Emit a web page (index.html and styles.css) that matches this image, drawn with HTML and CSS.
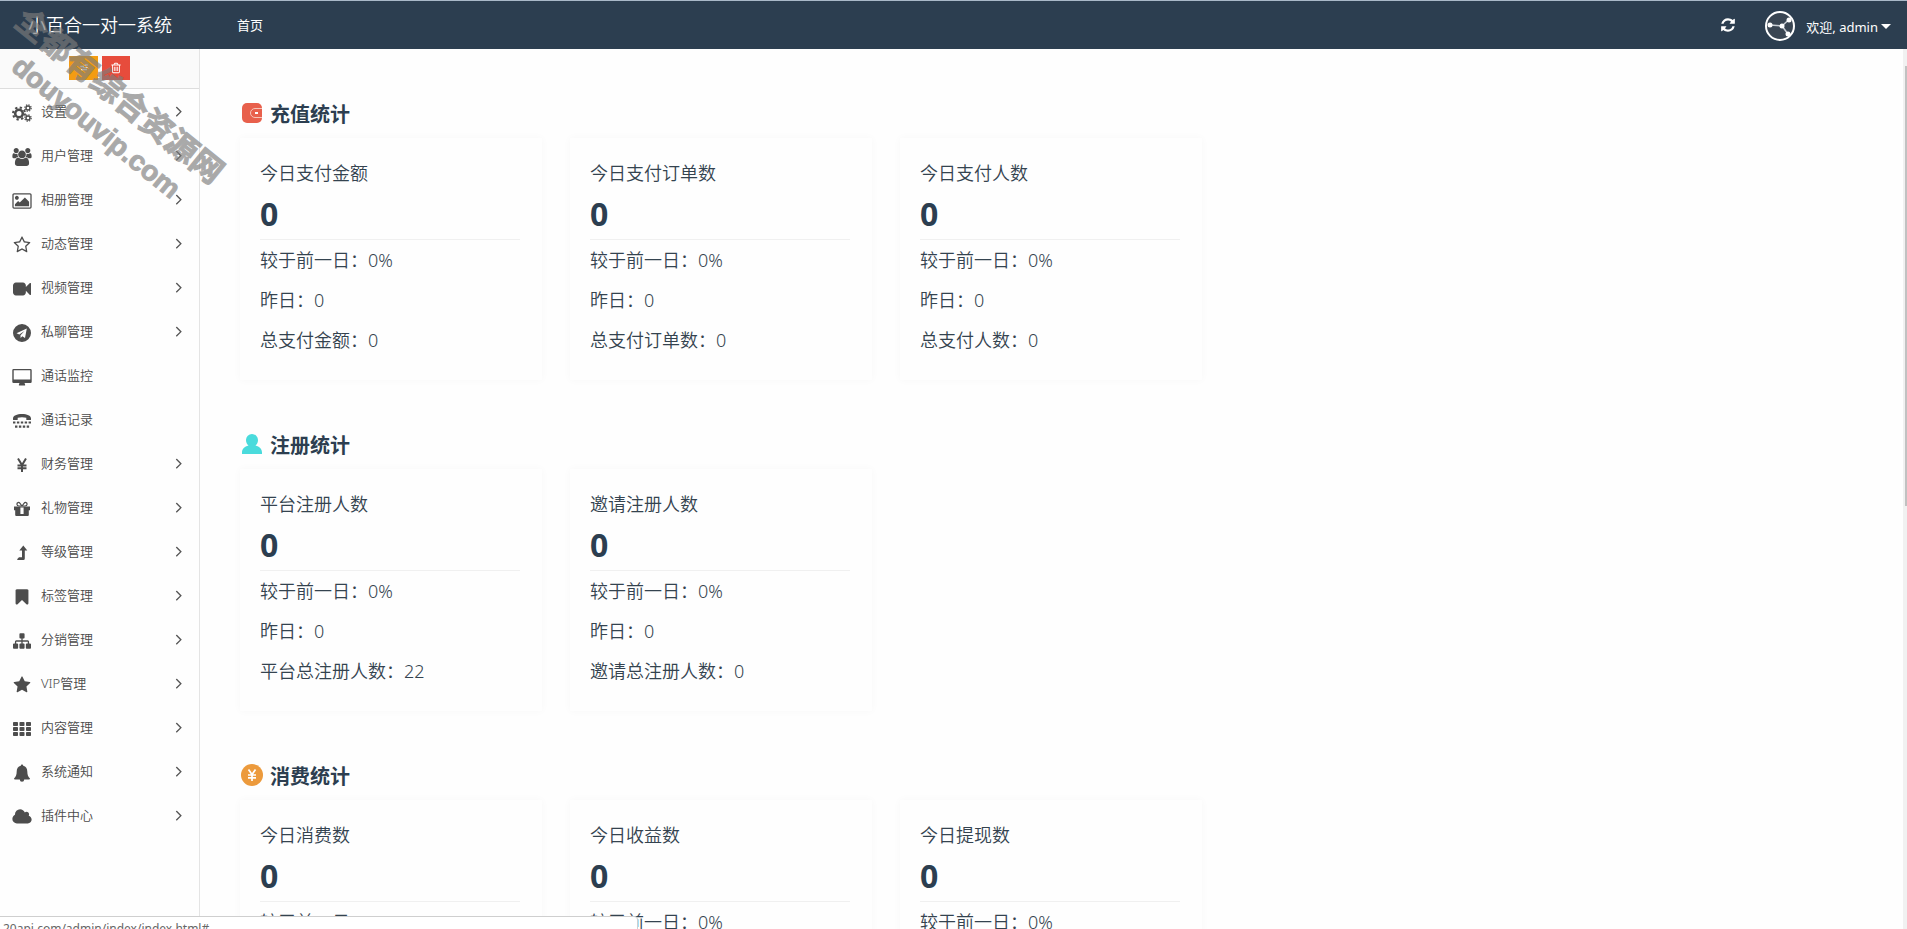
FILE: index.html
```html
<!DOCTYPE html>
<html lang="zh-CN">
<head>
<meta charset="utf-8">
<title>小百合一对一系统</title>
<link rel="stylesheet" href="styles.css">
</head>
<body>
<header class="navbar">
  <a class="brand" href="#">小百合一对一系统</a>
  <nav class="topnav"><a href="#">首页</a></nav>
  <div class="user-area">
    <button class="refresh" type="button" aria-label="刷新"><svg viewBox="0 0 1792 1792"><path d="M1639 1056q0 5-1 7-64 268-268 434.500t-478 166.500q-146 0-282.500-55t-243.500-157l-129 129q-19 19-45 19t-45-19-19-45v-448q0-26 19-45t45-19h448q26 0 45 19t19 45-19 45l-137 137q71 66 161 102t187 36q134 0 250-65t186-179q11-17 53-117 8-23 30-23h192q13 0 22.500 9.500t9.500 22.500zm25-800v448q0 26-19 45t-45 19h-448q-26 0-45-19t-19-45 19-45l138-138q-148-137-349-137-134 0-250 65t-186 179q-11 17-53 117-8 23-30 23h-199q-13 0-22.500-9.500t-9.500-22.500v-7q65-268 270-434.500t480-166.500q146 0 284 55.500t245 156.500l130-129q19-19 45-19t45 19 19 45z"/></svg></button>
    <button class="account" type="button">
      <svg class="avatar" viewBox="0 0 32 32"><circle cx="16" cy="16" r="14" fill="#3a4653" stroke="#fff" stroke-width="2"/><path d="M6 15L18 16L25 9.500M18 16L24 24" fill="none" stroke="#c9ced4" stroke-width="1.500"/><g fill="#fff"><circle cx="6" cy="15" r="2.500"/><circle cx="18" cy="16" r="2.500"/><circle cx="25" cy="10" r="2.500"/><circle cx="24" cy="24" r="2.500"/></g></svg>
      <span>欢迎, admin</span><i class="caret"></i>
    </button>
  </div>
</header>
<div class="body">
  <aside class="sidebar">
    <div class="shortcuts">
      <button class="sc sc-orange" type="button" aria-label="常用"><svg viewBox="0 0 16 16"><path d="M3 5h5v2h-5zM9 3h4v2h-4zM4 9h8v2h-8zM7 7h6v1h-6z"/></svg></button>
      <button class="sc sc-red" type="button" aria-label="清除缓存"><svg viewBox="0 0 1792 1792"><path d="M704 736v576q0 14-9 23t-23 9h-64q-14 0-23-9t-9-23v-576q0-14 9-23t23-9h64q14 0 23 9t9 23zm256 0v576q0 14-9 23t-23 9h-64q-14 0-23-9t-9-23v-576q0-14 9-23t23-9h64q14 0 23 9t9 23zm256 0v576q0 14-9 23t-23 9h-64q-14 0-23-9t-9-23v-576q0-14 9-23t23-9h64q14 0 23 9t9 23zm128 724v-948h-896v948q0 22 7 40.500t14.500 27 10.500 8.500h832q3 0 10.500-8.500t14.500-27 7-40.500zm-672-1076h448l-48-117q-7-9-17-11h-317q-10 2-17 11zm928 32v64q0 14-9 23t-23 9h-96v948q0 83-47 143.500t-113 60.500h-832q-66 0-113-58.500t-47-141.500v-952h-96q-14 0-23-9t-9-23v-64q0-14 9-23t23-9h309l70-167q15-37 54-63t79-26h320q40 0 79 26t54 63l70 167h309q14 0 23 9t9 23z"/></svg></button>
    </div>
    <nav class="menu" id="menu"></nav>
  </aside>
  <main class="content" id="content"></main>
  <div class="scrolltrack"><div class="thumb"></div></div>
</div>
<div class="watermark"><p class="wm-name">全都有综合资源网</p><p class="wm-url">douyouvip.com</p></div>
<div class="statusbar">20api.com/admin/index/index.html#</div>
<script src="app.js"></script>
</body>
</html>
```

FILE: styles.css
```css
* { box-sizing: border-box; }
body {
  margin: 0;
  height: 100vh;
  overflow: hidden;
  display: flex;
  flex-direction: column;
  background: #fefefe;
  color: #2c3e50;
  font-family: "Noto Sans", "Noto Sans CJK SC", sans-serif;
  font-size: 13px;
}
a { color: inherit; text-decoration: none; }
button { border: 0; padding: 0; background: none; color: inherit; font: inherit; }
p, h2 { margin: 0; }

.navbar {
  flex: none;
  display: flex;
  align-items: center;
  height: 49px;
  border-top: 1px solid #a9b8c8;
  background: #2c3e50;
  color: #fff;
}
.brand { width: 200px; padding: 0 0 2px 28px; font-size: 18px; font-weight: 350; }
.topnav { flex: 1; padding: 0 0 2px 37px; }
.user-area { display: flex; align-items: center; gap: 28px; padding-right: 16px; }
.refresh svg { display: block; width: 16px; height: 16px; fill: #fff; }
.account { display: flex; align-items: center; padding-top: 2px; }
.avatar { width: 32px; height: 32px; margin-right: 10px; }
.caret { margin-left: 3px; border: 5px solid transparent; border-top: 5px solid #fff; border-bottom: 0; }

.body { flex: 1; min-height: 0; display: flex; }
.sidebar { flex: none; width: 200px; border-right: 1px solid #e4e4e4; }
.shortcuts {
  display: flex;
  gap: 4px;
  height: 40px;
  padding: 7px 0 0 69px;
  background: #fafafa;
  border-bottom: 1px solid #ddd;
}
.sc { display: flex; align-items: center; justify-content: center; width: 28px; height: 24px; }
.sc svg { width: 12px; height: 12px; fill: #fff; }
.sc-orange { width: 29px; background: #f39c12; }
.sc-red { background: #e74c3c; }

.menu a {
  display: flex;
  align-items: center;
  height: 44px;
  padding: 0 11px 0 12px;
  color: #4a4a4a;
}
.menu .ico { width: 20px; height: 18px; margin: 3px 9px 0 0; fill: #4d4d4d; }
.menu span { flex: 1; padding-bottom: 2px; font-weight: 350; }
.menu .arrow { width: 18px; height: 20px; fill: #555; }

.content { flex: 1; min-width: 0; overflow: hidden; padding: 49px 40px 0; }
.block { margin-bottom: 49px; }
.block h2 { display: flex; align-items: center; gap: 8px; height: 30px; font-size: 20px; font-weight: 700; }
.block h2 svg { width: 22px; height: 22px; margin-left: 1px; margin-right: -1px; }
.cards { display: flex; gap: 30px; margin-top: 10px; }
.card { width: 302px; margin-right: -2px; height: 242px; padding: 15px 22px 15px 20px; background: #fefefe; box-shadow: 0 0 8px rgba(0, 0, 0, .03); }
.card p { color: #34434f; font-size: 18px; line-height: 40px; font-weight: 350; }
.card .num { height: 47px; border-bottom: 1px solid #f0f0f0; color: #2c3e50; font-size: 32px; line-height: 42px; font-weight: 700; }

.scrolltrack { flex: none; width: 4px; padding: 17px 0 0 2px; background: #f1f1f1; }
.thumb { height: 51%; background: #c1c1c1; }

.watermark {
  position: absolute;
  left: 32px;
  top: 1px;
  transform: rotate(39deg);
  transform-origin: 0 0;
  color: #7c7c7c;
  opacity: .65;
  font-weight: 700;
  white-space: nowrap;
  pointer-events: none;
  -webkit-text-stroke: 1px #7c7c7c;
}
.wm-name { font-size: 32px; line-height: 36px; }
.wm-url { padding: 4px 0 0 26px; font-family: "Liberation Sans", sans-serif; font-size: 28px; line-height: 36px; }

.statusbar {
  position: absolute;
  left: 0;
  top: calc(100vh - 13px);
  width: 638px;
  height: 24px;
  padding-left: 3px;
  border: 1px solid #cfcfcf;
  border-left: 0;
  border-top-right-radius: 4px;
  background: #fff;
  color: #666;
  font-size: 12px;
  line-height: 24px;
}
```

FILE: app.js
```js
const icons = {
  cogs: ['0 0 20 18', '<g fill="none" stroke="#4d4d4d"><circle cx="7" cy="9.500" r="3.800" stroke-width="2.600"/><circle cx="7" cy="9.500" r="6" stroke-width="2" stroke-dasharray="2.300 2.412"/><circle cx="16" cy="4" r="2" stroke-width="1.400"/><circle cx="16" cy="4" r="3.200" stroke-width="1.200" stroke-dasharray="1.350 1.163"/><circle cx="16" cy="14" r="2" stroke-width="1.400"/><circle cx="16" cy="14" r="3.200" stroke-width="1.200" stroke-dasharray="1.350 1.163"/></g>'],
  users: ['0 0 1920 1792', '<path d="M593 896q-162 5-265 128h-134q-82 0-138-40.500t-56-118.500q0-353 124-353 6 0 43.500 21t97.500 42.500 119 21.500q67 0 133-23-5 37-5 66 0 139 81 256zm1071 637q0 120-73 189.500t-194 69.500h-874q-121 0-194-69.500t-73-189.500q0-53 3.500-103.500t14-109 26.500-108.500 43-97.500 62-81 85.500-53.500 111.500-20q10 0 43 21.500t73 48 107 48 135 21.500 135-21.500 107-48 73-48 43-21.500q61 0 111.500 20t85.500 53.500 62 81 43 97.500 26.500 108.500 14 109 3.500 103.500zm-1024-1277q0 106-75 181t-181 75-181-75-75-181 75-181 181-75 181 75 75 181zm704 384q0 159-112.500 271.500t-271.500 112.500-271.500-112.500-112.500-271.500 112.500-271.500 271.500-112.500 271.500 112.500 112.500 271.500zm576 225q0 78-56 118.500t-138 40.500h-134q-103-123-265-128 81-117 81-256 0-29-5-66 66 23 133 23 59 0 119-21.500t97.500-42.500 43.500-21q124 0 124 353zm-128-609q0 106-75 181t-181 75-181-75-75-181 75-181 181-75 181 75 75 181z"/>'],
  picture: ['-64 0 1920 1792', '<path d="M576 576q0 80-56 136t-136 56-136-56-56-136 56-136 136-56 136 56 56 136zm1024 384v448h-1408v-192l320-320 160 160 512-512zm96-704h-1600q-13 0-22.500 9.500t-9.500 22.500v1216q0 13 9.500 22.500t22.500 9.500h1600q13 0 22.500-9.500t9.500-22.500v-1216q0-13-9.500-22.500t-22.500-9.500zm160 32v1216q0 66-47 113t-113 47h-1600q-66 0-113-47t-47-113v-1216q0-66 47-113t113-47h1600q66 0 113 47t47 113z"/>'],
  starO: ['0 0 1792 1792', '<path d="M1201 1004l306-297-422-62-189-382-189 382-422 62 306 297-73 421 378-199 377 199zm527-357q0 22-26 48l-363 354 86 500q1 7 1 20 0 50-41 50-19 0-40-12l-449-236-449 236q-22 12-40 12-21 0-31.500-14.500t-10.500-35.500q0-6 2-20l86-500-364-354q-25-27-25-48 0-37 56-46l502-73 225-455q19-41 49-41t49 41l225 455 502 73q56 9 56 46z"/>'],
  video: ['0 0 1792 1792', '<path d="M1792 352v1088q0 42-39 59-13 5-25 5-27 0-45-19l-403-403v166q0 119-84.500 203.500t-203.500 84.500h-704q-119 0-203.500-84.500t-84.500-203.500v-704q0-119 84.500-203.500t203.500-84.500h704q119 0 203.500 84.500t84.500 203.500v165l403-402q18-19 45-19 12 0 25 5 39 17 39 59z"/>'],
  telegram: ['0 0 18 18', '<path fill-rule="evenodd" d="M9 0a9 9 0 1 1 0 18a9 9 0 0 1 0-18zM13.800 4.600L3.500 9.300L6.300 10.500L11.500 7L7.500 11.200L7.600 14L9.300 12.300L12 14z"/>'],
  desktop: ['0 0 20 18', '<path fill-rule="evenodd" d="M1.500 1h17a1.200 1.200 0 0 1 1.200 1.200v11.600a1.200 1.200 0 0 1-1.200 1.200h-6l.6 1.500v1h-6.200v-1l.6-1.500h-6a1.200 1.200 0 0 1-1.200-1.200v-11.600a1.200 1.200 0 0 1 1.200-1.200zM1.700 2.300v9.200h16.600v-9.200z"/>'],
  tty: ['0 0 18 18', '<path d="M0 6.500C0 3.500 4 2 9 2s9 1.500 9 4.500v1q0 .5-.5.5h-3.500q-.7 0-.7-.6v-1.600q-4.300-1-8.600 0v1.600q0 .6-.7.600h-3.500q-.5 0-.5-.5zM0 9.500h2.400v2h-2.400zM3.900 9.500h2.400v2h-2.400zM7.800 9.500h2.400v2h-2.400zM11.700 9.500h2.400v2h-2.400zM15.600 9.500h2.400v2h-2.400zM2 13.500h2.400v2.200h-2.400zM5.900 13.500h2.400v2.200h-2.400zM9.800 13.500h2.400v2.200h-2.400zM13.700 13.500h2.400v2.200h-2.400z"/>'],
  yen: ['0 0 18 18', '<path fill="none" stroke="#4d4d4d" stroke-width="2" d="M5 2.500L9 9L13 2.500M4.500 9.500h9M4.500 12.300h9M9 9v7"/>'],
  gift: ['0 0 18 18', '<path fill-rule="evenodd" d="M1 6.500h16v3.800h-1.200v4.700q0 1-1 1h-11.600q-1 0-1-1v-4.700h-1.200zM7.400 7.500v6.500h3.200v-6.500z"/><path fill="none" stroke="#4d4d4d" stroke-width="1.200" d="M9 6L7 3.300C5.800 1.800 3.800 2.500 3.900 4.300C4 5.500 5 6 6 6zM9 6L11 3.300C12.200 1.800 14.200 2.500 14.100 4.300C14 5.500 13 6 12 6z"/>'],
  level: ['0 0 18 18', '<path d="M10.300 1.500L14.300 6.500H11.800V14.500Q11.800 16 10.300 16H4.500L4.100 15.300L6 13.300H9V6.500H6.300z"/>'],
  bookmark: ['0 0 1792 1792', '<path d="M1420 128q23 0 44 9 33 13 52.500 41t19.500 62v1289q0 34-19.500 62t-52.500 41q-19 8-44 8-48 0-83-32l-441-424-441 424q-36 33-83 33-23 0-44-9-33-13-52.500-41t-19.500-62v-1289q0-34 19.500-62t52.500-41q21-9 44-9h1048z"/>'],
  sitemap: ['0 0 1792 1792', '<path d="M1792 1248v320q0 40-28 68t-68 28h-320q-40 0-68-28t-28-68v-320q0-40 28-68t68-28h96v-192h-512v192h96q40 0 68 28t28 68v320q0 40-28 68t-68 28h-320q-40 0-68-28t-28-68v-320q0-40 28-68t68-28h96v-192h-512v192h96q40 0 68 28t28 68v320q0 40-28 68t-68 28h-320q-40 0-68-28t-28-68v-320q0-40 28-68t68-28h96v-192q0-52 38-90t90-38h512v-192h-96q-40 0-68-28t-28-68v-320q0-40 28-68t68-28h320q40 0 68 28t28 68v320q0 40-28 68t-68 28h-96v192h512q52 0 90 38t38 90v192h96q40 0 68 28t28 68z"/>'],
  star: ['0 0 1792 1792', '<path d="M1728 647q0 22-26 48l-363 354 86 500q1 7 1 20 0 21-10.500 35.500t-30.500 14.500q-19 0-40-12l-449-236-449 236q-22 12-40 12-21 0-31.500-14.500t-10.500-35.500q0-6 2-20l86-500-364-354q-25-27-25-48 0-37 56-46l502-73 225-455q19-41 49-41t49 41l225 455 502 73q56 9 56 46z"/>'],
  th: ['0 0 18 18', [2, 7, 12].map(y => [0, 6.5, 13].map(x => `<rect x="${x}" y="${y}" width="5" height="4" rx=".8"/>`).join('')).join('')],
  bell: ['0 0 18 18', '<path d="M9 .5a1.200 1.200 0 0 1 1.200 1.300C13 2.500 14.300 4.700 14.300 7.500C14.300 11 15.300 13 17 14.500Q17 15.500 16 15.500H11.200A2.200 2.200 0 0 1 6.800 15.500H2Q1 15.500 1 14.500C2.700 13 3.700 11 3.700 7.500C3.700 4.700 5 2.500 7.800 1.800A1.200 1.200 0 0 1 9 .5z"/>'],
  cloud: ['64 0 1920 1792', '<path d="M1984 1152q0 159-112.500 271.500t-271.500 112.500h-1088q-185 0-316.500-131.500t-131.500-316.500q0-132 71-241.500t187-163.500q-2-28-2-43 0-212 150-362t362-150q158 0 286.500 88t187.500 230q70-62 166-62 106 0 181 75t75 181q0 75-41 138 129 30 213 134.500t84 239.500z"/>'],
  arrow: ['0 0 1792 1792', '<path d="M1171 960q0 13-10 23l-466 466q-10 10-23 10t-23-10l-50-50q-10-10-10-23t10-23l393-393-393-393q-10-10-10-23t10-23l50-50q10-10 23-10t23 10l466 466q10 10 10 23z"/>'],
  wallet: ['0 0 22 22', '<rect x="1" y="1" width="20" height="20" rx="5" fill="#e8604c"/><path d="M21 6.500H14a4.500 4.500 0 0 0 0 9H21" fill="none" stroke="#f7c4b8"/><path d="M14 11h3" stroke="#fff" stroke-width="2"/>'],
  person: ['0 0 22 22', '<path fill="#4adbdc" d="M11 1a6 6 0 0 1 6 6c0 2.500-1 4.500-2.500 5.500C18.500 13.500 21 16 21 19.500V21H1V19.500C1 16 3.500 13.500 7.500 12.500C6 11.500 5 9.500 5 7a6 6 0 0 1 6-6z"/>'],
  coin: ['0 0 22 22', '<circle cx="11" cy="11" r="11" fill="#ec9a3c"/><path d="M7.500 5.500L11 10.500L14.500 5.500M7 11h8M7 13.800h8M11 10.500V17" fill="none" stroke="#fff" stroke-width="1.700"/>']
};
const svg = (name, cls) => `<svg class="${cls}" viewBox="${icons[name][0]}" aria-hidden="true">${icons[name][1]}</svg>`;

const menu = [
  ['cogs', '设置', 1], ['users', '用户管理', 1], ['picture', '相册管理', 1], ['starO', '动态管理', 1],
  ['video', '视频管理', 1], ['telegram', '私聊管理', 1], ['desktop', '通话监控', 0], ['tty', '通话记录', 0],
  ['yen', '财务管理', 1], ['gift', '礼物管理', 1], ['level', '等级管理', 1], ['bookmark', '标签管理', 1],
  ['sitemap', '分销管理', 1], ['star', 'VIP管理', 1], ['th', '内容管理', 1], ['bell', '系统通知', 1], ['cloud', '插件中心', 1]
];
document.getElementById('menu').innerHTML = menu.map(([icon, label, sub]) =>
  `<a href="#">${svg(icon, 'ico')}<span>${label}</span>${sub ? svg('arrow', 'arrow') : ''}</a>`).join('');

const blocks = [
  ['wallet', '充值统计', [['今日支付金额', '总支付金额：0'], ['今日支付订单数', '总支付订单数：0'], ['今日支付人数', '总支付人数：0']]],
  ['person', '注册统计', [['平台注册人数', '平台总注册人数：22'], ['邀请注册人数', '邀请总注册人数：0']]],
  ['coin', '消费统计', [['今日消费数'], ['今日收益数'], ['今日提现数']]]
];
document.getElementById('content').innerHTML = blocks.map(([icon, title, cards]) =>
  `<section class="block"><h2>${svg(icon, 'title-ico')}${title}</h2><div class="cards">` +
  cards.map(([name, total]) =>
    `<article class="card"><p>${name}</p><p class="num">0</p><p>较于前一日：0%</p>${total ? `<p>昨日：0</p><p>${total}</p>` : ''}</article>`).join('') +
  '</div></section>').join('');
```
